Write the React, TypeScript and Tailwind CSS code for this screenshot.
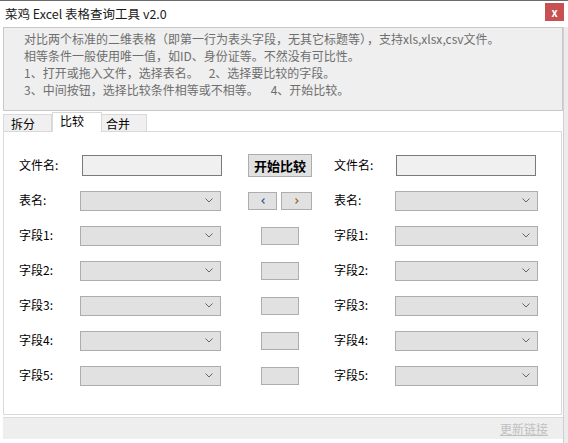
import React from "react";

const FONT = { fontFamily: '"Noto Sans CJK SC", "Noto Sans", sans-serif' };

function Chevron() {
  return (
    <svg width="8" height="5" viewBox="0 0 8 5" className="shrink-0">
      <polyline points="0.5,0.5 4,4 7.5,0.5" fill="none" stroke="#666" strokeWidth="1" />
    </svg>
  );
}

function Select({ w = 141 }: { w?: number }) {
  return (
    <div
      className="h-[20px] bg-[#e1e1e1] border border-[#adadad] flex items-center justify-end pr-[7px]"
      style={{ width: w }}
    >
      <Chevron />
    </div>
  );
}

function FileInput() {
  return <div className="w-[140px] h-[21px] bg-[#f0f0f0] border border-[#7a7a7a]" />;
}

function Label({ children }: { children: React.ReactNode }) {
  return <div className="w-[61px] shrink-0 text-[12px] text-black leading-none -mt-[2px]">{children}</div>;
}

function Row({
  label,
  left,
  middle,
  right,
}: {
  label: string;
  left: React.ReactNode;
  middle: React.ReactNode;
  right: React.ReactNode;
}) {
  return (
    <div className="h-[35px] flex items-center">
      <Label>{label}</Label>
      <div className="w-[141px] shrink-0 flex items-center">{left}</div>
      <div className="w-[27px] shrink-0" />
      <div className="w-[64px] shrink-0 flex items-center justify-center">{middle}</div>
      <div className="w-[22px] shrink-0" />
      <Label>{label}</Label>
      <div className="shrink-0 flex items-center">{right}</div>
    </div>
  );
}

function SmallBox() {
  return <div className="w-[38px] h-[18px] bg-[#e1e1e1] border border-[#adadad]" />;
}

export default function App() {
  const fields = ["字段1:", "字段2:", "字段3:", "字段4:", "字段5:"];
  return (
    <div className="w-[568px] h-[443px] bg-white overflow-hidden flex flex-col" style={FONT}>
      <div className="h-px bg-[#6b6b6b] shrink-0" />
      {/* title bar */}
      <div className="h-[26px] shrink-0 flex items-center justify-between pl-[5px] pr-[4px]">
        <div className="text-[12.5px] text-[#1a1a1a] leading-none">菜鸡 Excel 表格查询工具 v2.0</div>
        <div className="w-[19px] h-[18px] bg-[#c75050] flex items-center justify-center text-white text-[11px] font-bold leading-none -mt-[4px]">
          x
        </div>
      </div>
      {/* body */}
      <div className="flex flex-1">
        <div className="w-[563px] pl-[3px] flex flex-col">
          <div className="h-[84px] shrink-0 border border-[#c8c8c8] bg-[#efefef] pl-[20px] pt-[2px] text-[12px] leading-[17px] text-[#6e6e6e]">
            <div>
              对比两个标准的二维表格（即第一行为表头字段，无其它标题等）<span className="ml-[1px]">，</span>
              <span>支持xls,xlsx,csv文件。</span>
            </div>
            <div>相等条件一般使用唯一值，如ID、身份证等。不然没有可比性。</div>
            <div>
              1、打开或拖入文件，选择表名。<span className="ml-[10px]">2、选择要比较的字段。</span>
            </div>
            <div>
              3、中间按钮，选择比较条件相等或不相等。<span className="ml-[12px]">4、开始比较。</span>
            </div>
          </div>
          {/* tabs */}
          <div className="h-[20px] shrink-0 flex items-end relative">
            <div className="w-[49px] h-[17px] bg-[#f0f0f0] border border-b-0 border-[#d9d9d9] text-[12px] text-black leading-none pl-[7px] pt-[3px]">
              拆分
            </div>
            <div className="w-[50px] h-[20px] bg-white border border-b-0 border-[#d9d9d9] text-[12px] text-black leading-none pl-[7px] pt-[2px] relative z-10 -mb-px">
              比较
            </div>
            <div className="w-[45px] h-[17px] bg-[#f0f0f0] border border-b-0 border-l-0 border-[#d9d9d9] text-[12px] text-black leading-none pl-[4px] pt-[3px]">
              合并
            </div>
          </div>
          {/* panel */}
          <div className="w-[559px] h-[284px] shrink-0 border border-[#d9d9d9] bg-white pl-[15px] pt-[16px]">
            <Row
              label="文件名:"
              left={<div className="pl-[2px]"><FileInput /></div>}
              middle={
                <div className="w-[64px] h-[23px] bg-[#e1e1e1] border border-[#adadad] flex items-center justify-center text-[13px] font-bold text-black leading-none">
                  开始比较
                </div>
              }
              right={<div className="pl-px"><FileInput /></div>}
            />
            <Row
              label="表名:"
              left={<Select />}
              middle={
                <div className="flex gap-[4px]">
                  <div className="w-[29px] h-[18px] bg-[#e1e1e1] border border-[#adadad] flex items-center justify-center">
                    <svg width="4" height="6" viewBox="0 0 4 6">
                      <polyline points="3.5,0.5 1,3 3.5,5.5" fill="none" stroke="#3a5f9a" strokeWidth="1.2" />
                    </svg>
                  </div>
                  <div className="w-[31px] h-[18px] bg-[#e1e1e1] border border-[#adadad] flex items-center justify-center">
                    <svg width="4" height="6" viewBox="0 0 4 6">
                      <polyline points="0.5,0.5 3,3 0.5,5.5" fill="none" stroke="#9a6a2a" strokeWidth="1.2" />
                    </svg>
                  </div>
                </div>
              }
              right={<Select w={143} />}
            />
            {fields.map((f) => (
              <Row key={f} label={f} left={<Select />} middle={<SmallBox />} right={<Select w={143} />} />
            ))}
          </div>
          {/* status */}
          <div className="h-[22px] shrink-0 mt-[2px] border-t border-[#dcdcdc] bg-[#eeeeee] flex items-center justify-end pr-[15px]">
            <span className="text-[12px] text-[#c0c0c0] underline leading-none">更新链接</span>
          </div>
        </div>
        <div className="flex-1 bg-[#ececec] border-l border-[#d0d0d0]" />
      </div>
    </div>
  );
}
